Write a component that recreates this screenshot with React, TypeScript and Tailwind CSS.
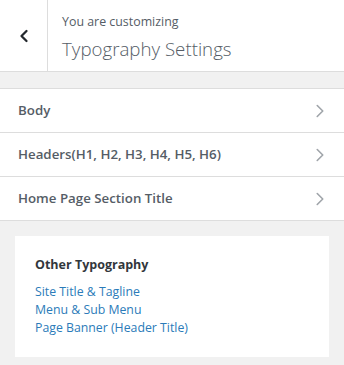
import React from "react";
import { ChevronLeft, ChevronRight } from "lucide-react";

const sections = ["Body", "Headers(H1, H2, H3, H4, H5, H6)", "Home Page Section Title"];
const links = ["Site Title & Tagline", "Menu & Sub Menu", "Page Banner (Header Title)"];

export default function App() {
  return (
    <div className="h-[365px] w-[344px] bg-[#f1f1f1] font-['Open_Sans',sans-serif] text-[#555d66]">
      {/* header */}
      <div className="flex h-[72px] border-b border-[#dddddd] bg-white">
        <button className="flex w-[48px] shrink-0 items-center justify-center border-r border-[#dddddd] text-[#23282d]">
          <ChevronLeft size={20} strokeWidth={2.75} />
        </button>
        <div className="flex flex-col justify-center pl-[14px] pt-[3px]">
          <span className="text-[12.4px] leading-[16px] text-[#555d66]">You are customizing</span>
          <span className="mt-[7px] text-[18.7px] font-light leading-[24px] text-[#555d66]">Typography Settings</span>
        </div>
      </div>

      {/* sections */}
      <div className="mt-[16px] border-t border-[#dddddd] bg-white">
        {sections.map((s) => (
          <div
            key={s}
            className="flex h-[44px] items-center justify-between border-b border-[#dddddd] pl-[18px] pr-[13px]"
          >
            <span className="text-[13.3px] font-semibold text-[#555d66]">{s}</span>
            <ChevronRight size={22} strokeWidth={1.75} className="text-[#a0a5aa]" />
          </div>
        ))}
      </div>

      {/* other typography */}
      <div className="mx-[15px] mt-[15px] bg-white px-[20px] pb-[20px] pt-[20px]">
        <h3 className="text-[12.5px] font-bold leading-[18px] text-[#32373c]">Other Typography</h3>
        <ul className="mt-[9px] text-[12.3px] leading-[18px]">
          {links.map((l) => (
            <li key={l}>
              <a href="#" className="text-[#2b7bb9]">{l}</a>
            </li>
          ))}
        </ul>
      </div>
    </div>
  );
}
